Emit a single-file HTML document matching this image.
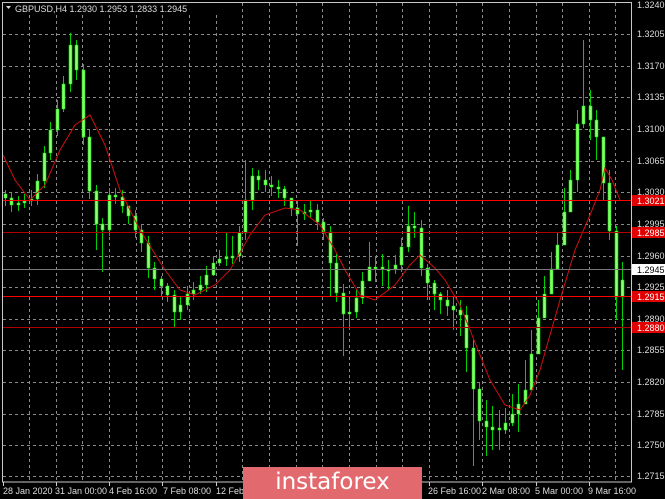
<!DOCTYPE html>
<html><head><meta charset="utf-8"><style>
html,body{margin:0;padding:0;background:#000;width:665px;height:499px;overflow:hidden;font-family:"Liberation Sans",sans-serif}
svg{position:absolute;left:0;top:0}
.logo{position:absolute;left:243px;top:467px;width:179px;height:32px;background:#e26a6e;color:#fff;font-size:23px;line-height:31px;text-align:center;font-family:"DejaVu Sans","Liberation Sans",sans-serif}
</style></head><body>
<svg width="665" height="499" xmlns="http://www.w3.org/2000/svg" font-family="Liberation Sans, sans-serif" font-size="9">
<g stroke="#8a8a8a" stroke-dasharray="3,3">
<path d="M29.5 3V482M56.5 3V482M82.5 3V482M109.5 3V482M136.5 3V482M162.5 3V482M189.5 3V482M216.5 3V482M242.5 3V482M269.5 3V482M296.5 3V482M322.5 3V482M349.5 3V482M376.5 3V482M402.5 3V482M429.5 3V482M456.5 3V482M482.5 3V482M509.5 3V482M536.5 3V482M562.5 3V482M589.5 3V482M615.5 3V482"/>
<path d="M3 2.5H631M3 34.5H631M3 66.5H631M3 97.5H631M3 129.5H631M3 161.5H631M3 192.5H631M3 224.5H631M3 256.5H631M3 287.5H631M3 319.5H631M3 350.5H631M3 382.5H631M3 414.5H631M3 445.5H631M3 476.5H631"/>
</g>
<g fill="#ddd">
<text x="637" y="8">1.3240</text><text x="637" y="37">1.3205</text><text x="637" y="69">1.3170</text><text x="637" y="100">1.3135</text><text x="637" y="132">1.3100</text><text x="637" y="164">1.3065</text><text x="637" y="195">1.3030</text><text x="637" y="227">1.2995</text><text x="637" y="259">1.2960</text><text x="637" y="290">1.2925</text><text x="637" y="322">1.2890</text><text x="637" y="353">1.2855</text><text x="637" y="385">1.2820</text><text x="637" y="417">1.2785</text><text x="637" y="448">1.2750</text><text x="637" y="479">1.2715</text>
</g>
<path stroke="#00d000" fill="none" d="M5.5 190V206M11.5 193V212M18.5 196V211M24.5 194V208M31.5 190V206M37.5 174V205M44.5 146V188M50.5 122V160M57.5 100V136M63.5 76V112M70.5 33V92M76.5 40V80M83.5 64V145M89.5 130V199M96.5 185V250M102.5 218V272M109.5 188V236M115.5 188V204M122.5 190V213M128.5 208V224M135.5 210V238M141.5 224V252M148.5 236V278M154.5 262V290M161.5 276V296M167.5 283V302M174.5 290V328M180.5 296V320M187.5 286V310M193.5 282V300M200.5 276V294M206.5 266V292M213.5 256V276M219.5 250V266M226.5 232V266M232.5 236V264M239.5 226V262M245.5 160V240M252.5 168V210M258.5 170V190M265.5 170V192M271.5 176V196M278.5 180V198M284.5 186V206M291.5 200V216M297.5 200V246M304.5 204V220M310.5 200V218M317.5 204V230M323.5 218V240M330.5 226V296M336.5 254V302M343.5 284V356M349.5 298V330M356.5 290V318M362.5 272V304M369.5 242V276M375.5 256V282M382.5 254V286M388.5 260V290M395.5 255V274M401.5 238V272M408.5 206V252M414.5 212V238M421.5 220V276M427.5 264V300M434.5 280V310M440.5 292V314M447.5 290V316M453.5 296V330M460.5 300V336M466.5 306V372M473.5 340V466M479.5 382V440M486.5 400V456M492.5 406V450M499.5 410V450M505.5 408V434M512.5 394V426M518.5 384V432M525.5 360V400M531.5 330V376M538.5 300V334M544.5 276V306M551.5 252V288M557.5 232V270M564.5 188V230M570.5 170V200M577.5 110V192M583.5 40V128M590.5 90V140M596.5 110V160M603.5 140V200M609.5 170V240M616.5 226V320M622.5 262V370"/>
<path fill="#90ff70" stroke="#00e000" stroke-width="0.6" d="M4 194h3v4h-3zM10 198h3v7h-3zM17 203h3v2h-3zM23 201h3v2h-3zM30 199h3v2h-3zM36 181h3v18h-3zM43 153h3v28h-3zM49 130h3v23h-3zM56 109h3v21h-3zM62 84h3v25h-3zM69 45h3v39h-3zM75 45h3v25h-3zM82 70h3v67h-3zM88 137h3v54h-3zM95 191h3v33h-3zM101 224h3v6h-3zM108 195h3v35h-3zM114 195h3v2h-3zM121 197h3v9h-3zM127 206h3v10h-3zM134 216h3v14h-3zM140 230h3v13h-3zM147 243h3v25h-3zM153 268h3v11h-3zM160 279h3v7h-3zM166 286h3v9h-3zM173 295h3v17h-3zM179 305h3v7h-3zM186 294h3v11h-3zM192 290h3v4h-3zM199 285h3v5h-3zM205 275h3v10h-3zM212 263h3v12h-3zM218 259h3v4h-3zM225 257h3v2h-3zM231 256h3v2h-3zM238 233h3v23h-3zM244 200h3v33h-3zM251 176h3v24h-3zM257 176h3v4h-3zM264 180h3v5h-3zM270 185h3v2h-3zM277 187h3v2h-3zM283 189h3v9h-3zM290 198h3v10h-3zM296 208h3v6h-3zM303 212h3v2h-3zM309 210h3v2h-3zM316 210h3v12h-3zM322 222h3v10h-3zM329 232h3v31h-3zM335 263h3v30h-3zM342 293h3v21h-3zM348 312h3v2h-3zM355 298h3v14h-3zM361 281h3v17h-3zM368 267h3v14h-3zM374 267h3v2h-3zM381 267h3v2h-3zM387 269h3v2h-3zM394 265h3v4h-3zM400 247h3v18h-3zM407 226h3v21h-3zM413 226h3v2h-3zM420 228h3v40h-3zM426 268h3v15h-3zM433 283h3v11h-3zM439 294h3v6h-3zM446 300h3v6h-3zM452 306h3v4h-3zM459 310h3v5h-3zM465 315h3v33h-3zM472 348h3v41h-3zM478 389h3v32h-3zM485 421h3v6h-3zM491 427h3v3h-3zM498 428h3v2h-3zM504 423h3v7h-3zM511 414h3v9h-3zM517 404h3v10h-3zM524 390h3v14h-3zM530 354h3v36h-3zM537 318h3v36h-3zM543 294h3v24h-3zM550 269h3v25h-3zM556 245h3v24h-3zM563 212h3v33h-3zM569 180h3v32h-3zM576 124h3v56h-3zM582 106h3v18h-3zM589 106h3v14h-3zM595 120h3v17h-3zM602 137h3v46h-3zM608 183h3v48h-3zM615 231h3v66h-3zM621 280h3v17h-3z"/>
<polyline fill="none" stroke="#d01010" points="3,155 15,180 30,200 45,185 60,150 75,125 90,115 105,145 120,190 140,230 165,270 180,290 195,295 215,285 230,270 250,235 265,215 285,208 300,210 320,225 335,250 345,270 360,295 375,300 395,285 410,265 420,255 435,268 445,280 460,305 470,330 490,380 505,405 520,410 530,395 540,370 550,335 560,300 575,250 590,215 600,190 605,168 612,180 620,200"/>
<path stroke="#ff0000" d="M3 200.5H631M3 296.5H631"/>
<path stroke="#b00000" d="M3 232.5H631M3 327.5H631"/>
<path stroke="#777" d="M3 269.5H631"/>
<rect x="632" y="195" width="33" height="11" fill="#e00000"/><text x="637" y="204" fill="#fff">1.3021</text>
<rect x="632" y="227" width="33" height="11" fill="#e00000"/><text x="637" y="236" fill="#fff">1.2985</text>
<rect x="632" y="264" width="33" height="11" fill="#fff"/><text x="637" y="273" fill="#000">1.2945</text>
<rect x="632" y="291" width="33" height="11" fill="#e00000"/><text x="637" y="300" fill="#fff">1.2915</text>
<rect x="632" y="322" width="33" height="11" fill="#e00000"/><text x="637" y="331" fill="#fff">1.2880</text>
<rect x="2.5" y="2.5" width="629" height="479.5" fill="none" stroke="#c8c8c8"/>
<path stroke="#ccc" d="M3.5 482V486M56.5 482V486M109.5 482V486M162.5 482V486M216.5 482V486M429.5 482V486M482.5 482V486M536.5 482V486M589.5 482V486"/>
<g fill="#ddd">
<text x="3" y="494">28 Jan 2020</text><text x="55" y="494">31 Jan 00:00</text><text x="109" y="494">4 Feb 16:00</text><text x="163" y="494">7 Feb 08:00</text><text x="216" y="494">12 Feb 00:00</text><text x="428" y="494">26 Feb 16:00</text><text x="482" y="494">2 Mar 08:00</text><text x="535" y="494">5 Mar 00:00</text><text x="588" y="494">9 Mar 16:00</text>
</g>
<rect x="3" y="3" width="225" height="12" fill="#000"/>
<path d="M6 6H11L8.5 9Z" fill="#ddd"/><text x="15" y="12" fill="#ddd">GBPUSD,H4  1.2930 1.2953 1.2833 1.2945</text>
</svg>
<div class="logo">instaforex</div>
</body></html>
